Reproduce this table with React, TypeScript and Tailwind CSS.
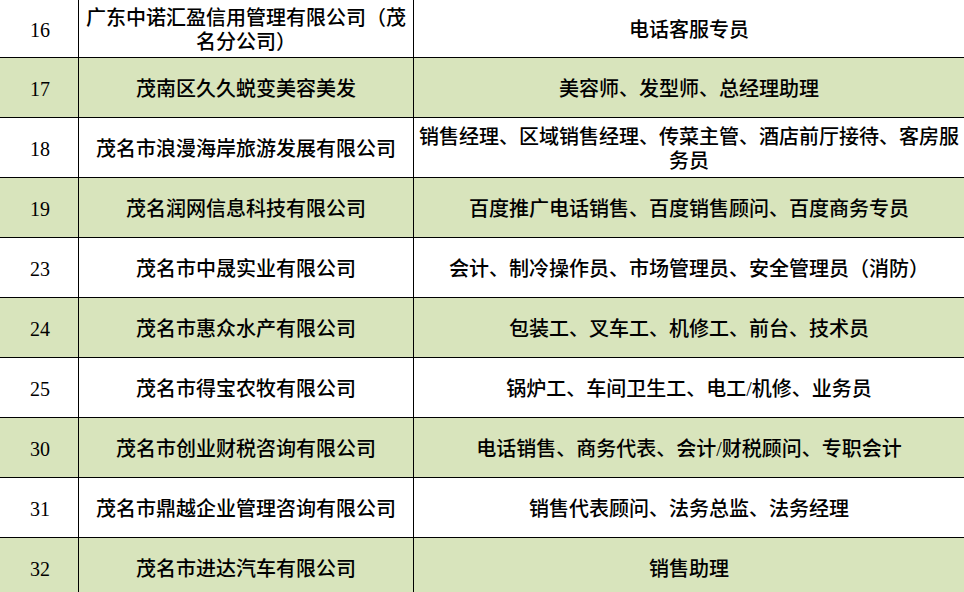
const rows: [string, string, string][] = [
  ["16", "广东中诺汇盈信用管理有限公司（茂名分公司）", "电话客服专员"],
  ["17", "茂南区久久蜕变美容美发", "美容师、发型师、总经理助理"],
  ["18", "茂名市浪漫海岸旅游发展有限公司", "销售经理、区域销售经理、传菜主管、酒店前厅接待、客房服务员"],
  ["19", "茂名润网信息科技有限公司", "百度推广电话销售、百度销售顾问、百度商务专员"],
  ["23", "茂名市中晟实业有限公司", "会计、制冷操作员、市场管理员、安全管理员（消防）"],
  ["24", "茂名市惠众水产有限公司", "包装工、叉车工、机修工、前台、技术员"],
  ["25", "茂名市得宝农牧有限公司", "锅炉工、车间卫生工、电工/机修、业务员"],
  ["30", "茂名市创业财税咨询有限公司", "电话销售、商务代表、会计/财税顾问、专职会计"],
  ["31", "茂名市鼎越企业管理咨询有限公司", "销售代表顾问、法务总监、法务经理"],
  ["32", "茂名市进达汽车有限公司", "销售助理"],
];

export default function App() {
  return (
    <div className="w-[964px] h-[592px] overflow-hidden bg-white text-black font-['Liberation_Serif','Noto_Sans_CJK_SC',serif]">
      {rows.map(([no, company, jobs], i) => (
        <div
          key={no}
          className={`grid grid-cols-[79px_335px_1fr] border-b border-black ${i === 0 ? "h-[58px]" : "h-[60px]"} ${i % 2 === 1 ? "bg-[#d8e4bc]" : "bg-white"}`}
        >
          <div className="flex items-center justify-center border-r border-black pt-[3px] pl-[2px] text-[20px]">{no}</div>
          <div className="flex items-center justify-center border-r border-black px-1 pt-[3px] text-center text-[20px] leading-[24px] font-medium">
            {company}
          </div>
          <div className="flex items-center justify-center px-1 pt-[3px] text-center text-[20px] leading-[24px] font-medium">
            {jobs}
          </div>
        </div>
      ))}
    </div>
  );
}
